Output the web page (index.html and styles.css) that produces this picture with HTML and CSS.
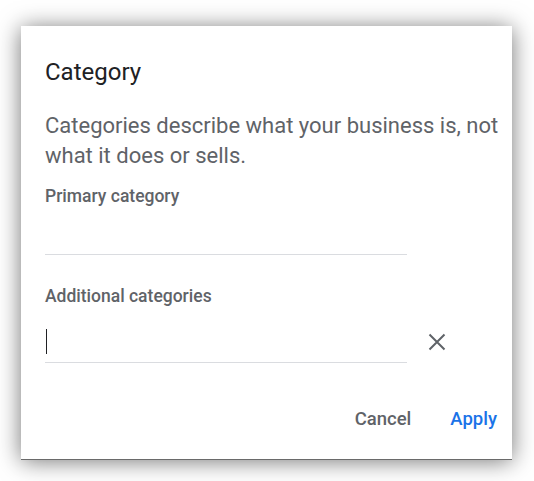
FILE: index.html
```
<!DOCTYPE html>
<html>
<head>
<meta charset="utf-8">
<link rel="stylesheet" href="styles.css">
</head>
<body>
<div class="page">
  <div class="dialog">
    <h1 class="title">Category</h1>
    <p class="desc">Categories describe what your business is, not<br>what it does or sells.</p>
    <div class="label">Primary category</div>
    <div class="field field-primary"></div>
    <div class="label label-additional">Additional categories</div>
    <div class="field-row">
      <div class="field field-additional"><span class="caret"></span></div>
      <span class="clear" aria-label="Clear">
        <svg width="18" height="18" viewBox="0 0 18 18"><path d="M1.5 1.5 L16.5 16.5 M16.5 1.5 L1.5 16.5" stroke="#5f6368" stroke-width="2" fill="none"/></svg>
      </span>
    </div>
    <div class="actions">
      <button class="btn btn-cancel">Cancel</button>
      <button class="btn btn-apply">Apply</button>
    </div>
  </div>
</div>
</body>
</html>
```
FILE: styles.css
```
* { box-sizing: border-box; }
html, body { margin: 0; padding: 0; background: #fff; }
body { font-family: Roboto, "Noto Sans", Arial, sans-serif; }
.page { padding: 26px 0 22px 21px; min-height: 481px; }
.dialog {
  width: 491px;
  height: 433px;
  background: #fff;
  padding: 30px 8px 0 24px;
  box-shadow: 0 1px 0 #6a6a6a, 0 2px 22px rgba(0,0,0,0.55);
  display: flex;
  flex-direction: column;
}
.title {
  margin: 0;
  font-size: 24px;
  line-height: 32px;
  font-weight: 400;
  color: #202124;
}
.desc {
  margin: 23px 0 0;
  font-size: 22px;
  line-height: 30px;
  color: #5f6368;
}
.label {
  margin-top: 13px;
  font-size: 17.5px;
  line-height: 24px;
  font-weight: 500;
  color: #5f6368;
}
.label-additional { margin-top: 29px; }
.field {
  width: 362px;
  border-bottom: 1px solid #dadce0;
}
.field-primary { height: 47px; }
.field-row {
  display: flex;
  align-items: center;
}
.field-additional {
  height: 55px;
  padding: 21px 0 0 1px;
}
.caret {
  display: block;
  width: 1px;
  height: 25px;
  background: #202124;
}
.clear {
  display: flex;
  margin-left: 21px;
  margin-top: 12px;
}
.actions {
  display: flex;
  justify-content: flex-end;
  gap: 25px;
  margin-top: 44px;
}
.btn {
  border: 0;
  background: transparent;
  font-family: Roboto, "Noto Sans", Arial, sans-serif;
  font-size: 18.5px;
  line-height: 24px;
  font-weight: 500;
  padding: 0 7px;
}
.btn-cancel { color: #5f6368; }
.btn-apply { color: #1a73e8; }
```
